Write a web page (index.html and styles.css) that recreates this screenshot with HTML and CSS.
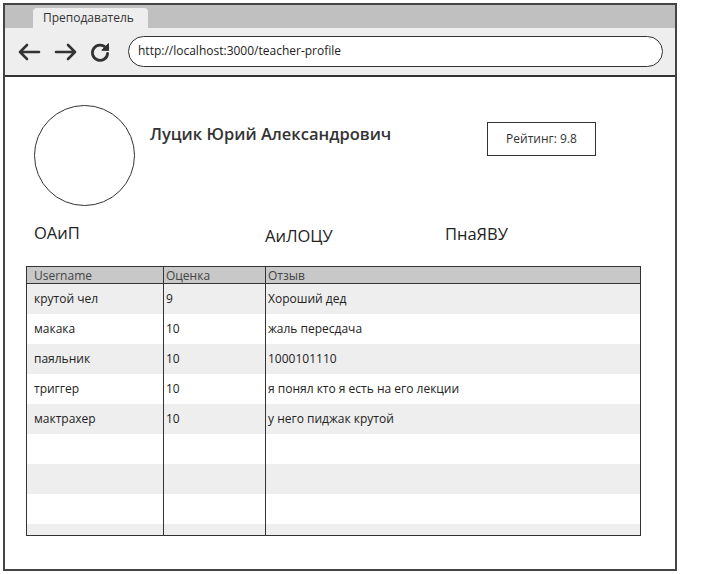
FILE: index.html
```html
<!DOCTYPE html>
<html lang="ru">
<head>
<meta charset="utf-8">
<title>Преподаватель</title>
<link rel="stylesheet" href="styles.css">
</head>
<body>
<div class="window">
  <div class="tabbar">
    <div class="tab">Преподаватель</div>
  </div>
  <div class="navbar">
    <svg class="nav-icon back" width="24" height="18" viewBox="0 0 24 18"><path d="M22 9H3M10 2L3 9l7 7" fill="none" stroke="#333" stroke-width="2.6" stroke-linecap="round" stroke-linejoin="round"/></svg>
    <svg class="nav-icon fwd" width="24" height="18" viewBox="0 0 24 18"><path d="M2 9h19M14 2l7 7-7 7" fill="none" stroke="#333" stroke-width="2.6" stroke-linecap="round" stroke-linejoin="round"/></svg>
    <svg class="nav-icon reload" width="20" height="20" viewBox="0 0 20 20"><path d="M15.8 5.8A7.6 7.6 0 1 0 17.6 11.5" fill="none" stroke="#333" stroke-width="2.8" stroke-linecap="round"/><path d="M18.4 1.6L18.6 8.4 11.8 8.2z" fill="#333" stroke="#333" stroke-width="1" stroke-linejoin="round"/></svg>
    <div class="url">http://localhost:3000/teacher-profile</div>
  </div>
  <div class="content">
    <div class="profile">
      <div class="avatar"></div>
      <div class="name">Луцик Юрий Александрович</div>
      <div class="rating">Рейтинг: 9.8</div>
    </div>
    <div class="subjects">
      <div class="subject s1">ОАиП</div>
      <div class="subject s2">АиЛОЦУ</div>
      <div class="subject s3">ПнаЯВУ</div>
    </div>
    <table class="grid">
      <colgroup><col class="c1"><col class="c2"><col class="c3"></colgroup>
      <thead>
        <tr><th>Username</th><th>Оценка</th><th>Отзыв</th></tr>
      </thead>
      <tbody>
        <tr><td class="u">крутой чел</td><td>9</td><td>Хороший дед</td></tr>
        <tr><td class="u">макака</td><td>10</td><td>жаль пересдача</td></tr>
        <tr><td class="u">паяльник</td><td>10</td><td>1000101110</td></tr>
        <tr><td class="u">триггер</td><td>10</td><td>я понял кто я есть на его лекции</td></tr>
        <tr><td class="u">мактрахер</td><td>10</td><td>у него пиджак крутой</td></tr>
        <tr><td></td><td></td><td></td></tr>
        <tr><td></td><td></td><td></td></tr>
        <tr><td></td><td></td><td></td></tr>
        <tr class="last"><td></td><td></td><td></td></tr>
      </tbody>
    </table>
  </div>
</div>
</body>
</html>
```
FILE: styles.css
```css
* { box-sizing: border-box; }
body {
  margin: 0;
  background: #fff;
  font-family: "Open Sans", "Noto Sans", sans-serif;
  color: #333;
}
.window {
  margin: 3px 0 0 3px;
  width: 674px;
  height: 568px;
  border: 2px solid #444;
  display: flex;
  flex-direction: column;
}
.tabbar {
  height: 23px;
  background: #c0c0c0;
  padding: 3px 0 0 28px;
}
.tab {
  width: 115px;
  height: 20px;
  background: #eeeeee;
  border-radius: 4px 4px 0 0;
  font-size: 12px;
  line-height: 20px;
  padding-left: 10px;
  color: #333;
}
.navbar {
  height: 49px;
  background: #eeeeee;
  border-bottom: 2px solid #333;
  display: flex;
  align-items: center;
  padding-left: 12px;
}
.nav-icon { display: block; flex: none; }
.back { margin-right: 13px; }
.fwd { margin-right: 12px; }
.reload { margin-right: 18px; }
.url {
  width: 535px;
  height: 31px;
  border: 1.5px solid #333;
  border-radius: 16px;
  background: #fff;
  font-size: 12px;
  line-height: 28px;
  padding-left: 9px;
  color: #222;
}
.content {
  flex: 1;
  padding: 28px 0 0 21px;
}
.profile {
  display: flex;
  align-items: flex-start;
  height: 101px;
}
.avatar {
  width: 101px;
  height: 101px;
  border: 1.5px solid #333;
  border-radius: 50%;
  flex: none;
  margin-left: 8px;
}
.name {
  margin: 17px 0 0 15px;
  font-size: 16.5px;
  font-weight: 600;
  color: #333;
  width: 337px;
}
.rating {
  margin-top: 17px;
  width: 109px;
  height: 34px;
  border: 1.5px solid #333;
  font-size: 12px;
  line-height: 31px;
  text-align: center;
  color: #333;
}
.subjects {
  display: flex;
  margin-top: 15px;
  height: 24px;
  padding-left: 8px;
}
.subject {
  font-size: 16.5px;
  color: #222;
  line-height: 24px;
}
.s1 { width: 231px; }
.s2 { width: 180px; padding-top: 3px; }
.s3 { padding-top: 1px; }
.grid {
  margin-top: 21px;
  width: 615px;
  border-collapse: collapse;
  table-layout: fixed;
  border: 1.5px solid #333;
  font-size: 12px;
}
.c1 { width: 137px; }
.c2 { width: 102px; }
.grid th {
  height: 17px;
  background: #c8c8c8;
  text-align: left;
  font-weight: 400;
  padding: 0 2px;
  border-left: 1.5px solid #333;
  border-bottom: 1.5px solid #333;
  color: #444;
  line-height: 15px;
}
.grid td {
  height: 30px;
  padding: 0 2px;
  border-left: 1.5px solid #333;
  vertical-align: middle;
  color: #222;
  white-space: nowrap;
}
.grid th:first-child, .grid td.u, .grid td:first-child { padding-left: 7px; }
.grid tbody tr:nth-child(odd) { background: #eeeeee; }
.grid tbody tr:nth-child(even) { background: #fff; }
.grid tr.last td { height: 12px; }
```
